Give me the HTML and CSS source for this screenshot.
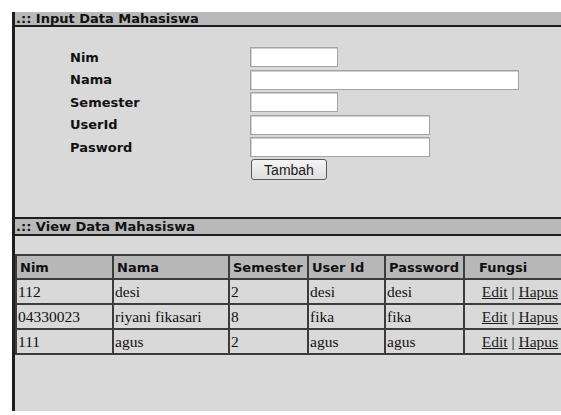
FILE: index.html
```html
<!DOCTYPE html>
<html lang="id">
<head>
<meta charset="utf-8">
<title>Data Mahasiswa</title>
<link rel="stylesheet" href="styles.css">
</head>
<body>
<div class="panel">
  <div class="bar">.:: Input Data Mahasiswa</div>
  <form class="entry">
    <label class="lbl" for="nim">Nim</label>
    <input class="fld w-short" id="nim" type="text">
    <label class="lbl" for="nama">Nama</label>
    <input class="fld w-long" id="nama" type="text">
    <label class="lbl" for="semester">Semester</label>
    <input class="fld w-short" id="semester" type="text">
    <label class="lbl" for="userid">UserId</label>
    <input class="fld w-mid" id="userid" type="text">
    <label class="lbl" for="pasword">Pasword</label>
    <input class="fld w-mid" id="pasword" type="password">
    <span></span>
    <button class="btn" type="button">Tambah</button>
  </form>
  <div class="bar bar-view">.:: View Data Mahasiswa</div>
  <table class="data">
    <colgroup>
      <col class="c-nim"><col class="c-nama"><col class="c-sem"><col class="c-user"><col class="c-pass"><col class="c-fn">
    </colgroup>
    <thead>
      <tr>
        <th>Nim</th><th>Nama</th><th>Semester</th><th>User Id</th><th>Password</th><th class="fn-head">Fungsi</th>
      </tr>
    </thead>
    <tbody>
      <tr>
        <td>112</td><td>desi</td><td>2</td><td>desi</td><td>desi</td>
        <td class="fn"><a href="#">Edit</a> | <a href="#">Hapus</a></td>
      </tr>
      <tr>
        <td>04330023</td><td>riyani fikasari</td><td>8</td><td>fika</td><td>fika</td>
        <td class="fn"><a href="#">Edit</a> | <a href="#">Hapus</a></td>
      </tr>
      <tr>
        <td>111</td><td>agus</td><td>2</td><td>agus</td><td>agus</td>
        <td class="fn"><a href="#">Edit</a> | <a href="#">Hapus</a></td>
      </tr>
    </tbody>
  </table>
</div>
</body>
</html>
```
FILE: styles.css
```css
html, body {
  margin: 0;
  padding: 0;
  background: #ffffff;
  overflow: hidden;
}

.panel {
  margin: 12px 0 0 12px;
  width: 563px;
  height: 399px;
  border-left: 3px solid #1f1f1f;
  background: #d9d9d9;
  font-family: "DejaVu Sans", Verdana, sans-serif;
  color: #111;
}

/* section title strips */
.bar {
  height: 13px;
  line-height: 13px;
  padding-left: 1px;
  background: #b9b9b9;
  border-bottom: 2px solid #1e1e1e;
  font-weight: bold;
  font-size: 13px;
  white-space: nowrap;
}

.bar-view {
  height: 15px;
  line-height: 15px;
  border-top: 2px solid #1e1e1e;
}

/* input form */
.entry {
  display: grid;
  grid-template-columns: 180px auto;
  grid-auto-rows: 20px;
  row-gap: 2.5px;
  justify-items: start;
  align-items: center;
  padding: 20px 0 0 55px;
  height: 134px;
  margin: 0 0 36px 0;
}

.lbl {
  font-weight: bold;
  font-size: 13px;
}

.fld {
  box-sizing: border-box;
  height: 20px;
  margin: 0;
  padding: 0 2px;
  border: 1px solid #a3a3a3;
  box-shadow: inset 1px 1px 0 #cfcfcf;
  background: #ffffff;
  font-size: 12px;
}

.w-short { width: 88px; }
.w-mid { width: 180px; }
.w-long { width: 269px; }

.btn {
  box-sizing: border-box;
  width: 76px;
  height: 21px;
  margin: 0 0 0 1px;
  padding: 0;
  border: 1px solid #5a5a5a;
  border-radius: 3px;
  background: linear-gradient(#f4f4f4, #dedede);
  font-family: "Liberation Sans", Arial, sans-serif;
  font-size: 14px;
  color: #1a1a1a;
}

/* listing table */
.data {
  margin-top: 18px;
  border-collapse: separate;
  border-spacing: 0;
  border: 1px solid #3c3c3c;
  table-layout: fixed;
  width: 562px;
}

.c-nim { width: 97px; }
.c-nama { width: 116px; }
.c-sem { width: 79px; }
.c-user { width: 77px; }
.c-pass { width: 79px; }
.c-fn { width: 112px; }

.data th,
.data td {
  border: 1px solid #3c3c3c;
  text-align: left;
  white-space: nowrap;
  overflow: hidden;
}

.data th {
  height: 22px;
  padding: 0 0 0 3px;
  background: #b8b8b8;
  font-family: "DejaVu Sans", Verdana, sans-serif;
  font-weight: bold;
  font-size: 13px;
}

.data td {
  height: 23px;
  padding: 0 0 0 1px;
  font-family: "Liberation Serif", "Times New Roman", serif;
  font-size: 15.5px;
}

.data th.fn-head { padding-left: 14px; }
.data td.fn { text-align: center; padding: 0; }

.data a {
  color: #1a1a1a;
  text-decoration: underline;
}
```
